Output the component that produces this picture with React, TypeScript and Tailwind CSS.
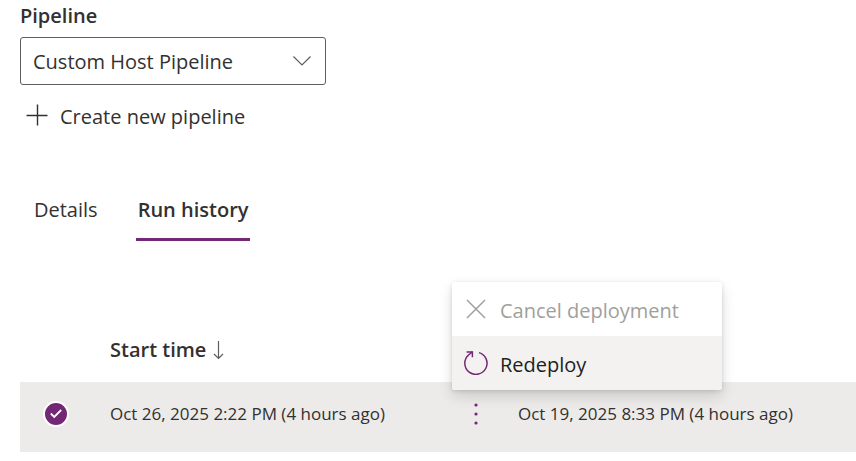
import React, { useState } from "react";

const tabs = ["Details", "Run history"];

function ChevronDown() {
  return (
    <svg aria-hidden="true" viewBox="0 0 20 12" className="pointer-events-none col-start-1 row-start-1 mr-3.5 h-3 w-5 self-center justify-self-end" fill="none" stroke="#605e5c" strokeWidth="1.2">
      <path d="M1.500 1.500 10 10l8.500-8.500" />
    </svg>
  );
}

function PlusIcon() {
  return (
    <svg aria-hidden="true" viewBox="0 0 22 22" className="mb-1 size-[22px]" fill="none" stroke="#323130" strokeWidth="1.4">
      <path d="M11.500 0.500v21M0.500 11.500h21" />
    </svg>
  );
}

function SortArrow() {
  return (
    <svg aria-hidden="true" viewBox="0 0 12 20" className="h-5 w-3" fill="none" stroke="#605e5c" strokeWidth="1.2">
      <path d="M6.500 1v17.500M2 14l4.500 4.500L11 14" />
    </svg>
  );
}

function CloseIcon() {
  return (
    <svg aria-hidden="true" viewBox="0 0 24 24" className="size-6" fill="none" stroke="#a19f9d" strokeWidth="1.5">
      <path d="m3 3 18 18M21 3 3 21" />
    </svg>
  );
}

function RedeployIcon() {
  return (
    <svg aria-hidden="true" viewBox="0 0 24 24" className="size-6" fill="none" stroke="#742774" strokeWidth="1.5">
      <path d="M15 1.600A11.100 11.100 0 1 1 4.500 4L8.400.9" />
      <path d="M2.600.9h5.800v5.400" />
    </svg>
  );
}

export default function App() {
  const [tab, setTab] = useState("Run history");
  const [selected, setSelected] = useState(true);

  return (
    <main className="pl-5 pt-1 font-['Open_Sans','Noto_Sans',sans-serif] text-xl text-[#323130]">
      <label htmlFor="pipeline" className="block h-[33px] text-xl leading-6 font-semibold">
        Pipeline
      </label>
      <div className="grid w-[306px]">
        <select id="pipeline" className="col-start-1 row-start-1 h-12 appearance-none rounded-[3px] border border-[#605e5c] bg-white pt-0.5 pr-10 pl-3 text-xl">
          <option>Custom Host Pipeline</option>
        </select>
        <ChevronDown />
      </div>
      <button type="button" className="flex h-16 items-center gap-3 pl-1.5">
        <PlusIcon />
        Create new pipeline
      </button>

      <div role="tablist" className="mt-7 flex gap-6">
        {tabs.map((name) => (
          <button
            key={name}
            type="button"
            role="tab"
            aria-selected={tab === name}
            onClick={() => setTab(name)}
            className={
              tab === name
                ? "h-16 border-b-3 border-[#742774] px-0.5 pt-1 font-semibold"
                : "h-16 border-b-3 border-transparent px-3.5 pt-1"
            }
          >
            {name}
          </button>
        ))}
      </div>

      <table className="mt-[75px] w-full table-fixed text-left">
        <thead>
          <tr className="h-[66px]">
            <th className="w-[90px]" aria-label="Selection" />
            <th className="w-[342px] pt-0.5 font-semibold" aria-sort="descending">
              <button type="button" className="flex items-center gap-1.5">
                Start time
                <SortArrow />
              </button>
            </th>
            <th className="w-12" aria-label="Actions" />
            <th aria-label="End time" />
          </tr>
        </thead>
        <tbody>
          <tr className="h-[70px] bg-[#edebe9] text-[17px]">
            <td className="pb-1.5 pl-[23px]">
              <span className="grid size-[26px] place-items-center">
                <input
                  type="checkbox"
                  aria-label="Select run"
                  checked={selected}
                  onChange={(e) => setSelected(e.target.checked)}
                  className="col-start-1 row-start-1 size-[26px] appearance-none rounded-full border-2 border-white bg-[#742774]"
                />
                <svg aria-hidden="true" viewBox="0 0 12 12" className="pointer-events-none col-start-1 row-start-1 size-3" fill="none" stroke="white" strokeWidth="1.8">
                  <path d="m.8 5.500 3.400 3.400L11.200 2" />
                </svg>
              </span>
            </td>
            <td className="pb-1.5 whitespace-nowrap">Oct 26, 2025 2:22 PM (4 hours ago)</td>
            <td className="relative pb-1.5">
              <button type="button" aria-label="More actions" aria-haspopup="menu" aria-expanded="true" className="grid h-9 w-12 place-items-center">
                <svg aria-hidden="true" viewBox="0 0 4 22" className="h-[22px] w-1" fill="#742774">
                  <circle cx="2" cy="2" r="1.600" />
                  <circle cx="2" cy="11" r="1.600" />
                  <circle cx="2" cy="20" r="1.600" />
                </svg>
              </button>
              <div role="menu" className="absolute bottom-[62px] left-0 w-[270px] overflow-hidden rounded-[3px] bg-white text-xl shadow-[0_6px_14px_rgba(0,0,0,0.14),0_1px_4px_rgba(0,0,0,0.12)]">
                <button type="button" role="menuitem" disabled className="flex h-[54px] w-full items-center gap-3 px-3 text-[#a19f9d]">
                  <CloseIcon />
                  <span className="pt-1">Cancel deployment</span>
                </button>
                <button type="button" role="menuitem" className="flex h-[54px] w-full items-center gap-3 bg-[#f3f2f1] px-3 text-[#201f1e]">
                  <RedeployIcon />
                  <span className="pt-1">Redeploy</span>
                </button>
              </div>
            </td>
            <td className="pb-1.5 pl-[18px] whitespace-nowrap">Oct 19, 2025 8:33 PM (4 hours ago)</td>
          </tr>
        </tbody>
      </table>
    </main>
  );
}
